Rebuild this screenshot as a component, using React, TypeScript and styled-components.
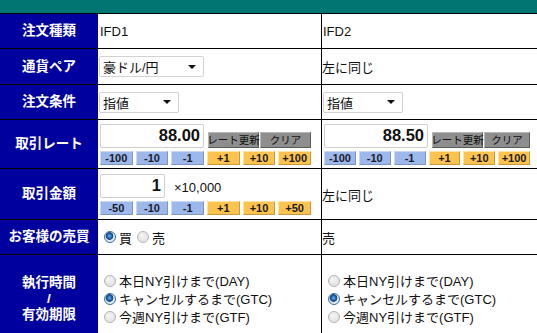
import React from "react";
import styled, { createGlobalStyle } from "styled-components";

const GlobalStyle = createGlobalStyle`
  html, body {
    margin: 0;
    padding: 0;
    background: #ffffff;
    overflow: hidden;
  }
  body {
    font-family: "Liberation Sans", "Noto Sans CJK JP", sans-serif;
    color: #111;
  }
`;

const Page = styled.div`
  width: 537px;
`;

const TopBar = styled.div`
  height: 13px;
  background-color: #007672;
  border-bottom: 1px solid #000;
`;

const Row = styled.div<{ $h: number }>`
  display: grid;
  grid-template-columns: 98px 223px 216px;
  height: ${(p) => p.$h}px;
  box-sizing: border-box;
  border-bottom: 1px solid #000;
`;

const Label = styled.div`
  background-color: #00009e;
  color: #fff;
  font-family: "Liberation Sans", "Noto Sans CJK JP", sans-serif;
  font-weight: 700;
  font-size: 13.5px;
  line-height: 16px;
  display: flex;
  flex-direction: column;
  align-items: center;
  justify-content: center;
  text-align: center;
`;

const Cell = styled.div<{ $divider?: boolean; $pad?: number }>`
  display: flex;
  align-items: center;
  padding-left: ${(p) => (p.$pad ?? 2)}px;
  border-left: ${(p) => (p.$divider ? "1px solid #000" : "none")};
  font-size: 13px;
  overflow: hidden;
`;

const Plain = styled.span`
  font-family: "Liberation Sans", "Noto Sans CJK JP", sans-serif;
  font-size: 13px;
  color: #111;
`;

const Select = styled.div<{ $w: number }>`
  width: ${(p) => p.$w}px;
  height: 21px;
  box-sizing: border-box;
  margin-left: -1px;
  border: 1px solid #d2d2d2;
  border-radius: 2px;
  background: #fff;
  display: flex;
  align-items: center;
  justify-content: space-between;
  padding: 0 7px 0 3px;
  font-family: "Liberation Sans", "Noto Sans CJK JP", sans-serif;
  font-size: 13px;
`;

const Arrow = styled.span`
  width: 0;
  height: 0;
  border-left: 4px solid transparent;
  border-right: 4px solid transparent;
  border-top: 4px solid #111;
`;

const Stack = styled.div<{ $w: number }>`
  width: ${(p) => p.$w}px;
  display: flex;
  flex-direction: column;
  gap: 3px;
`;

const TopLine = styled.div`
  display: flex;
  align-items: flex-end;
  gap: 4px;
`;

const NumBox = styled.div<{ $w: number }>`
  width: ${(p) => p.$w}px;
  height: 24px;
  box-sizing: border-box;
  border: 1px solid #cfcfcf;
  border-radius: 2px;
  background: #fff;
  display: flex;
  align-items: center;
  justify-content: flex-end;
  padding-right: 3px;
  font-family: "Liberation Sans", sans-serif;
  font-weight: 700;
  font-size: 16.5px;
  color: #111;
`;

const GrayPair = styled.div`
  flex: 1;
  display: flex;
  gap: 1px;
`;

const GrayButton = styled.div<{ $w?: number }>`
  ${(p) => (p.$w ? `width: ${p.$w}px;` : "flex: 1;")}
  height: 16px;
  box-sizing: border-box;
  background: #8e8e8e;
  border: 1px solid;
  border-color: #b8b8b8 #5a5a5a #5a5a5a #b8b8b8;
  display: flex;
  align-items: center;
  justify-content: center;
  font-family: "Noto Sans CJK JP", sans-serif;
  font-size: 10.5px;
  color: #111;
  white-space: nowrap;
`;

const Steps = styled.div`
  display: grid;
  grid-template-columns: repeat(6, 1fr);
  gap: 3px;
`;

const StepButton = styled.div<{ $plus?: boolean }>`
  height: 14px;
  box-sizing: border-box;
  background: ${(p) => (p.$plus ? "#fec34e" : "#9db8ea")};
  border: 1px solid;
  border-color: ${(p) =>
    p.$plus ? "#ffe3a6 #c89a3c #c89a3c #ffe3a6" : "#c9d8f4 #7f95bf #7f95bf #c9d8f4"};
  display: flex;
  align-items: center;
  justify-content: center;
  font-family: "Liberation Sans", sans-serif;
  font-weight: 700;
  font-size: 11px;
  color: #1a1a2a;
`;

const Unit = styled.span`
  font-family: "Liberation Sans", sans-serif;
  font-size: 13px;
  margin-left: 5px;
  margin-bottom: 3px;
`;

const RadioGroup = styled.div<{ $column?: boolean }>`
  display: flex;
  flex-direction: ${(p) => (p.$column ? "column" : "row")};
  gap: ${(p) => (p.$column ? "1px" : "5px")};
  padding-left: 4px;
`;

const RadioItem = styled.label`
  display: flex;
  align-items: center;
  gap: 3px;
  height: 17px;
  font-family: "Liberation Sans", "Noto Sans CJK JP", sans-serif;
  font-size: 13px;
  color: #111;
  white-space: nowrap;
`;

const RadioDot = styled.span<{ $on?: boolean }>`
  width: 12px;
  height: 12px;
  box-sizing: border-box;
  border-radius: 50%;
  border: 1px solid ${(p) => (p.$on ? "#3b6e9e" : "#b4b4b4")};
  background: ${(p) =>
    p.$on
      ? "radial-gradient(circle at 45% 40%, #6fb0ea 0, #1d5ea8 2.5px, #15467e 3.5px, #e9eef4 4.2px, #d6dde6 100%)"
      : "radial-gradient(circle at 40% 35%, #f4f4f4 0, #dcdcdc 100%)"};
`;

function Radio({ on, text }: { on?: boolean; text: string }) {
  return (
    <RadioItem>
      <RadioDot $on={on} />
      {text}
    </RadioItem>
  );
}

function RateBlock({ value, width }: { value: string; width: number }) {
  return (
    <Stack $w={width}>
      <TopLine>
        <NumBox $w={104}>{value}</NumBox>
        <GrayPair>
          <GrayButton $w={51}>レート更新</GrayButton>
          <GrayButton>クリア</GrayButton>
        </GrayPair>
      </TopLine>
      <Steps>
        {["-100", "-10", "-1"].map((s) => (
          <StepButton key={s}>{s}</StepButton>
        ))}
        {["+1", "+10", "+100"].map((s) => (
          <StepButton key={s} $plus>
            {s}
          </StepButton>
        ))}
      </Steps>
    </Stack>
  );
}

const timeOptions = [
  "本日NY引けまで(DAY)",
  "キャンセルするまで(GTC)",
  "今週NY引けまで(GTF)",
];

function TimeRadios() {
  return (
    <RadioGroup $column>
      {timeOptions.map((t, i) => (
        <Radio key={t} on={i === 1} text={t} />
      ))}
    </RadioGroup>
  );
}

export default function App() {
  return (
    <Page>
      <GlobalStyle />
      <TopBar />
      <Row $h={35}>
        <Label>注文種類</Label>
        <Cell>
          <Plain>IFD1</Plain>
        </Cell>
        <Cell $divider $pad={1}>
          <Plain>IFD2</Plain>
        </Cell>
      </Row>
      <Row $h={36}>
        <Label>通貨ペア</Label>
        <Cell>
          <Select $w={105}>
            豪ドル/円
            <Arrow />
          </Select>
        </Cell>
        <Cell $divider $pad={0}>
          <Plain>左に同じ</Plain>
        </Cell>
      </Row>
      <Row $h={35}>
        <Label>注文条件</Label>
        <Cell>
          <Select $w={80}>
            指値
            <Arrow />
          </Select>
        </Cell>
        <Cell $divider>
          <Select $w={80}>
            指値
            <Arrow />
          </Select>
        </Cell>
      </Row>
      <Row $h={49}>
        <Label>取引レート</Label>
        <Cell>
          <RateBlock value="88.00" width={211} />
        </Cell>
        <Cell $divider>
          <RateBlock value="88.50" width={206} />
        </Cell>
      </Row>
      <Row $h={51}>
        <Label>取引金額</Label>
        <Cell>
          <Stack $w={211}>
            <TopLine>
              <NumBox $w={65}>1</NumBox>
              <Unit>×10,000</Unit>
            </TopLine>
            <Steps>
              {["-50", "-10", "-1"].map((s) => (
                <StepButton key={s}>{s}</StepButton>
              ))}
              {["+1", "+10", "+50"].map((s) => (
                <StepButton key={s} $plus>
                  {s}
                </StepButton>
              ))}
            </Steps>
          </Stack>
        </Cell>
        <Cell $divider $pad={0}>
          <Plain>左に同じ</Plain>
        </Cell>
      </Row>
      <Row $h={35}>
        <Label>お客様の売買</Label>
        <Cell>
          <RadioGroup>
            <Radio on text="買" />
            <Radio text="売" />
          </RadioGroup>
        </Cell>
        <Cell $divider $pad={0}>
          <Plain>売</Plain>
        </Cell>
      </Row>
      <Row $h={88}>
        <Label>
          <span>執行時間</span>
          <span>/</span>
          <span>有効期限</span>
        </Label>
        <Cell>
          <TimeRadios />
        </Cell>
        <Cell $divider>
          <TimeRadios />
        </Cell>
      </Row>
    </Page>
  );
}
